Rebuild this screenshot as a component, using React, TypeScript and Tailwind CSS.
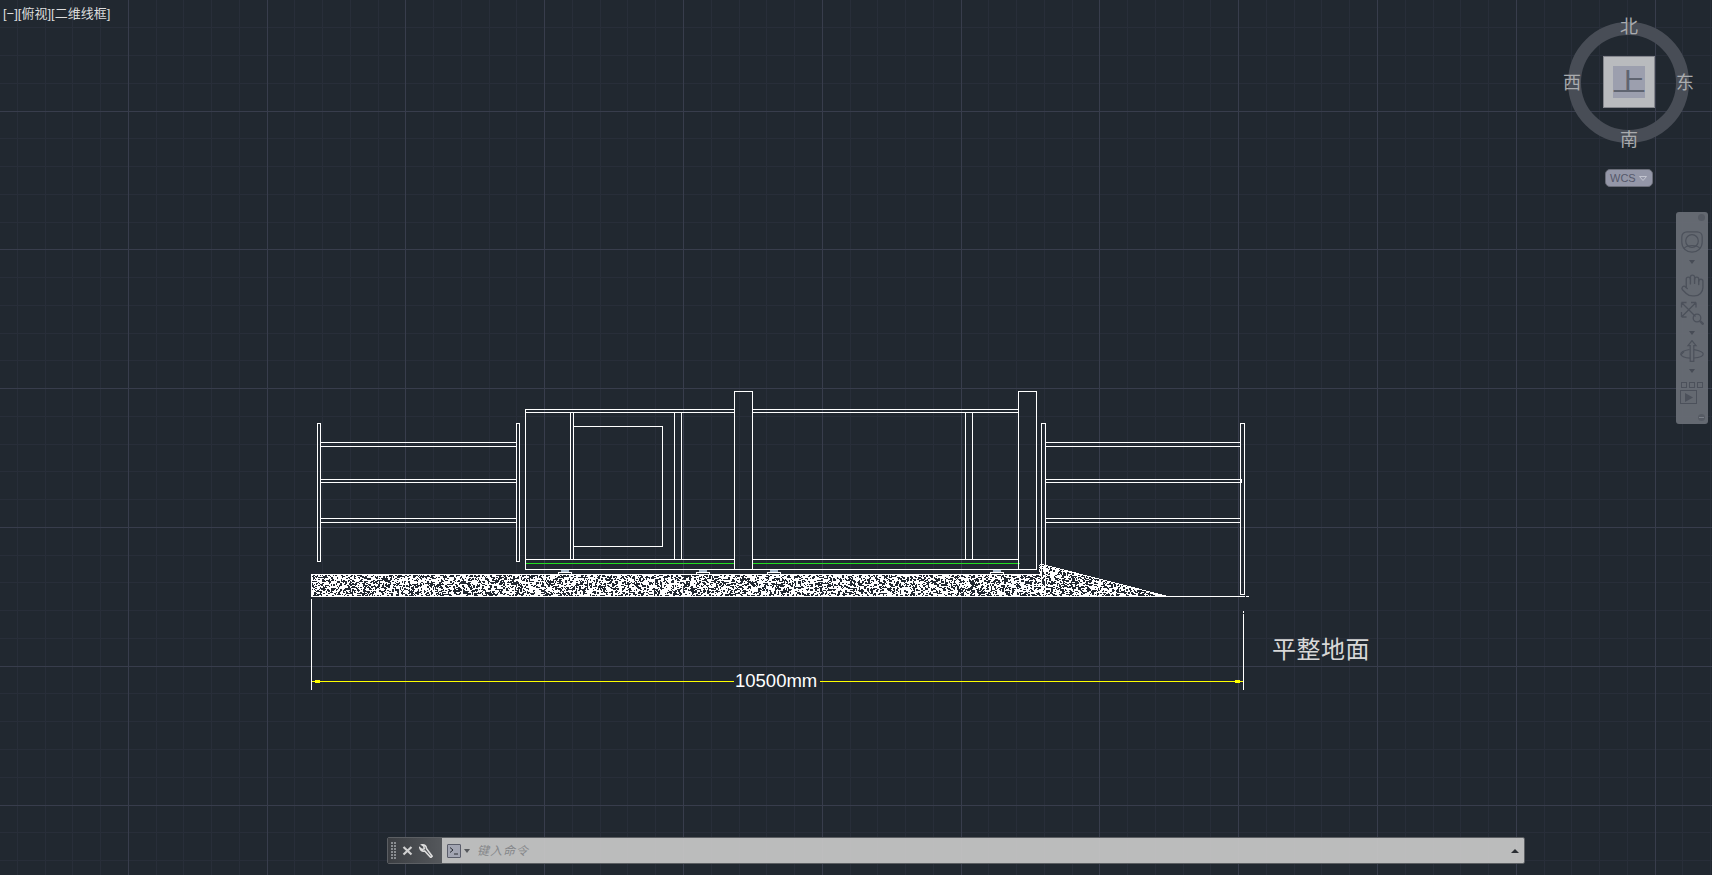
import React from 'react';
import { Hand } from 'lucide-react';

const cjk = "font-['Liberation_Sans','Noto_Sans_CJK_SC',sans-serif]";

// grid spacing in the model view, every fifth line is a major one
const STEP = 27.76;
const gridLines = (origin: number, max: number) => {
  const out: { p: number; major: boolean }[] = [];
  for (let k = -Math.ceil(origin / STEP); origin + k * STEP < max; k++) {
    out.push({ p: Math.floor(origin + k * STEP) + 0.5, major: ((k % 5) + 5) % 5 === 0 });
  }
  return out;
};

// ground hatch: white field with small dark holes dug at seeded random, written as a single path
const buildHatch = () => {
  let seed = 2024;
  const rnd = () => {
    seed = (seed * 1664525 + 1013904223) % 4294967296;
    return seed / 4294967296;
  };
  const X0 = 311;
  const Y0 = 564;
  const W = 856;
  const H = 32;
  const cells = new Uint8Array(W * H).fill(1);
  const holes = Math.floor(W * H * 0.27);
  for (let n = 0; n < holes; n++) {
    const hx = Math.floor(rnd() * W);
    const hy = Math.floor(rnd() * H);
    const hw = 1 + Math.floor(rnd() * 2);
    const hh = rnd() < 0.3 ? 2 : 1;
    for (let y = hy; y < Math.min(H, hy + hh); y++) {
      for (let x = hx; x < Math.min(W, hx + hw); x++) cells[y * W + x] = 0;
    }
  }
  const top = (x: number) => (x < 1039 ? 575 : 564 + ((x - 1039) * 32) / 126);
  let d = '';
  for (let y = 0; y < H; y++) {
    let run = -1;
    for (let x = 0; x <= W; x++) {
      const on = x < W && cells[y * W + x] === 1 && Y0 + y >= top(X0 + x);
      if (on && run < 0) run = x;
      if (!on && run >= 0) {
        d += `M${X0 + run} ${Y0 + y}h${x - run}v1h-${x - run}z`;
        run = -1;
      }
    }
  }
  return d;
};
const hatch = buildHatch();

const Box = ({ x, y, w, h }: { x: number; y: number; w: number; h: number }) => (
  <rect x={x + 0.5} y={y + 0.5} width={w} height={h} fill="none" stroke="#fff" />
);
const HLine = ({ x1, x2, y, c = '#fff' }: { x1: number; x2: number; y: number; c?: string }) => (
  <line x1={x1} x2={x2} y1={y + 0.5} y2={y + 0.5} stroke={c} />
);
const VLine = ({ x, y1, y2 }: { x: number; y1: number; y2: number }) => (
  <line x1={x + 0.5} x2={x + 0.5} y1={y1} y2={y2} stroke="#fff" />
);

const Rails = ({ x1, x2 }: { x1: number; x2: number }) => (
  <g>
    {[442, 446, 479, 482, 518, 522].map((y) => (
      <HLine key={y} x1={x1} x2={x2} y={y} />
    ))}
  </g>
);

const Foot = ({ x }: { x: number }) => (
  <g>
    <rect x={x + 3} y={570} width={8} height={2} fill="#a9bccd" />
    <rect x={x + 0.5} y={572.5} width={13} height={2} fill="#212830" stroke="#fff" />
  </g>
);

const Drawing = () => (
  <svg className="absolute inset-0" width={1712} height={875} shapeRendering="crispEdges">
    {gridLines(128.3, 1712).filter((l) => !l.major).map((l) => (
      <line key={l.p} x1={l.p} x2={l.p} y1={0} y2={875} stroke="#282e39" />
    ))}
    {gridLines(111, 875).filter((l) => !l.major).map((l) => (
      <line key={l.p} y1={l.p} y2={l.p} x1={0} x2={1712} stroke="#282e39" />
    ))}
    {gridLines(128.3, 1712).filter((l) => l.major).map((l) => (
      <line key={l.p} x1={l.p} x2={l.p} y1={0} y2={875} stroke="#383d4c" />
    ))}
    {gridLines(111, 875).filter((l) => l.major).map((l) => (
      <line key={l.p} y1={l.p} y2={l.p} x1={0} x2={1712} stroke="#383d4c" />
    ))}

    {/* ground and ramp */}
    <path d={hatch} fill="#fff" />
    <HLine x1={311} x2={1040} y={574} />
    <HLine x1={311} x2={1245} y={596} />
    <HLine x1={1246} x2={1249} y={596} />
    <VLine x={311} y1={574} y2={597} />
    <line x1={1040} y1={564} x2={1166} y2={596} stroke="#fff" />

    {/* left fence */}
    <Rails x1={320} x2={517} />
    <Box x={317} y={423} w={3} h={138} />
    <Box x={516} y={423} w={3} h={138} />

    {/* container */}
    <VLine x={525} y1={409} y2={570} />
    {[409, 412].map((y) => (
      <g key={y}>
        <HLine x1={525} x2={735} y={y} />
        <HLine x1={752} x2={1019} y={y} />
      </g>
    ))}
    <HLine x1={525} x2={735} y={559} />
    <HLine x1={752} x2={1019} y={559} />
    <HLine x1={526} x2={735} y={563} c="#22dd22" />
    <HLine x1={752} x2={1020} y={563} c="#22dd22" />
    <HLine x1={525} x2={1037} y={569} />
    {[570, 573, 674, 681, 965, 972].map((x) => (
      <VLine key={x} x={x} y1={412} y2={559} />
    ))}
    <Box x={573} y={426} w={89} h={120} />
    <Box x={734} y={391} w={18} h={178} />
    <Box x={1018} y={391} w={18} h={178} />
    {[558, 696, 767, 990].map((x) => (
      <Foot key={x} x={x} />
    ))}

    {/* right fence */}
    <Rails x1={1045} x2={1241} />
    <Box x={1041} y={423} w={4} h={171} />
    <Box x={1240} y={423} w={4} h={171} />
    <VLine x={1241} y1={479} y2={483} />

    {/* dimension */}
    <VLine x={311} y1={599} y2={690} />
    <VLine x={1243} y1={614} y2={690} />
    <VLine x={1243} y1={611} y2={613} />
    <HLine x1={312} x2={734} y={681} c="#ffff00" />
    <HLine x1={820} x2={1243} y={681} c="#ffff00" />
    <rect x={315} y={680} width={5} height={3} fill="#ffff00" />
    <rect x={1235} y={680} width={5} height={3} fill="#ffff00" />
  </svg>
);

const Chevron = ({ className }: { className: string }) => (
  <svg className={className} width={6} height={4} viewBox="0 0 6 4">
    <path d="M0 0h6L3 4z" fill="#474c56" />
  </svg>
);

const NavBar = () => (
  <div className="absolute left-[1676px] top-[212px] flex h-[212px] w-[32px] flex-col items-center rounded-[3px] bg-[#6b7079]/90 text-[#4c515b]">
    <span className="absolute right-[3px] top-[2px] h-[7px] w-[7px] rounded-full bg-[#565b64]" />
    <svg className="mt-[19px]" width={22} height={22} viewBox="0 0 22 22" fill="none" stroke="currentColor" strokeWidth={1.2}>
      <path d="M6 .8h10c3 0 5.2 2.2 5.2 5v5.5c0 6-5 9.9-10.2 9.900S.8 17.300.8 11.300V6C.8 3 3 .8 6 .8z" />
      <circle cx={11} cy={10} r={6.3} />
      <path d="M3 17.500c2-2.500 5-3 8-3s6 .5 8 3" />
    </svg>
    <Chevron className="mt-[7px]" />
    <Hand className="mt-[9px]" size={25} strokeWidth={1.3} />
    <svg className="mt-[3px]" width={24} height={24} viewBox="0 0 24 24" fill="none" stroke="currentColor" strokeWidth={1.3}>
      <path d="M1.500 1.500l14 14M1.500 1.500h5M1.500 1.500v5M16 1.500L1.500 16M16 1.500h-5M16 1.500v5M1.500 16v-5M1.500 16h5" />
      <circle cx={17} cy={17} r={3.800} />
      <path d="M20 20l3.500 3.500" strokeWidth={2.400} />
    </svg>
    <Chevron className="mt-[6px]" />
    <svg className="mt-[5px]" width={24} height={22} viewBox="0 0 24 22" fill="none" stroke="currentColor" strokeWidth={1.2}>
      <path d="M12 .6l4 5h-2.200v15.800h-3.600V5.600H8z" />
      <path d="M9.500 9.500C4 10.500.8 12 .8 14s3.500 4 9.400 4.200M14 9.600c5.500 1 9.200 2.400 9.200 4.400s-3.500 3.600-9.400 4" />
      <path d="M4 11.500L.8 15" />
    </svg>
    <Chevron className="mt-[7px]" />
    <div className="mt-[9px] flex gap-[2px]">
      <span className="h-[6px] w-[6px] border border-[#4c515b]" />
      <span className="h-[6px] w-[6px] border border-[#4c515b]" />
      <span className="h-[6px] w-[6px] border border-[#4c515b]" />
    </div>
    <div className="ml-[4px] mt-[2px] flex h-[14px] w-[17px] items-center justify-center self-start border border-[#4c515b]">
      <svg width={8} height={9} viewBox="0 0 8 9">
        <path d="M0 0l8 4.500L0 9z" fill="#4c515b" />
      </svg>
    </div>
    <span className="absolute bottom-[3px] right-[3px] flex h-[7px] w-[7px] items-center justify-center rounded-full bg-[#565b64]">
      <span className="h-px w-[5px] bg-[#7a7f88]" />
    </span>
  </div>
);

const ViewCube = () => (
  <div className={`absolute left-[1560px] top-[14px] h-[176px] w-[138px] text-[18px] leading-[18px] text-[#a9abae] ${cjk}`}>
    <div className="absolute left-[8px] top-[8px] h-[121px] w-[121px] rounded-full border-[13px] border-[#484d56]" />
    <span className="absolute left-[60px] top-[4px]">北</span>
    <span className="absolute left-[60px] top-[117px]">南</span>
    <span className="absolute left-[3px] top-[60px]">西</span>
    <span className="absolute left-[116px] top-[60px]">东</span>
    <div className="absolute left-[43px] top-[42px] flex h-[52px] w-[52px] items-center justify-center border border-[#85878d] bg-[#b9bbbe]">
      <div className="flex h-[32px] w-[32px] items-center justify-center overflow-hidden bg-[#9c9fae] text-[34px] leading-[32px] text-[#5f6470]">
        <span className="scale-y-75">上</span>
      </div>
    </div>
    <div className="absolute left-[45px] top-[155px] flex h-[18px] w-[48px] items-center justify-between rounded-[5px] border border-[#6a6d78] bg-[#9497a8] pl-[4px] pr-[5px] text-[11px] leading-none text-[#55586a]">
      <span className="font-['Liberation_Sans',sans-serif]">WCS</span>
      <svg width={8} height={5} viewBox="0 0 8 5" fill="none" stroke="#c2c4cf">
        <path d="M.5.500h7L4 4.500z" />
      </svg>
    </div>
  </div>
);

const CommandBar = () => (
  <div className="absolute left-[387px] top-[837px] flex h-[27px] w-[1138px] items-stretch overflow-hidden rounded-[2px] border border-[#5c5f63]">
    <div className="flex w-[54px] items-center bg-gradient-to-r from-[#3b3e42] to-[#55585c] pl-[3px]">
      <div className="grid grid-cols-2 gap-[1px]">
        {Array.from({ length: 12 }).map((_, i) => (
          <span key={i} className="h-[2px] w-[2px] bg-[#8a8d91]" />
        ))}
      </div>
      <svg className="ml-[6px]" width={11} height={11} viewBox="0 0 11 11" stroke="#d0d0d0" strokeWidth={2.200}>
        <path d="M1.500 2l8 7.500M9.500 2l-8 7.500" />
      </svg>
      <svg className="ml-[6px]" width={14} height={14} viewBox="0 0 16 16" fill="none" stroke="#dcdcdc" strokeWidth={1.800}>
        <path d="M15 14l-1.500 1.500L6.500 8C4.500 8.500 2 7.500 1 4.500L3.500 6.500 6 5.500 5.500 2.500 3.500 1c3-.5 5 1.500 5 4z" />
      </svg>
    </div>
    <div className="flex flex-1 items-center bg-[#c4c4c4]/95 pl-[5px] pr-[4px]">
      <div className="flex h-[14px] w-[14px] items-center justify-center rounded-[1px] border border-[#5a5d6a] bg-[#a2a5b2]">
        <svg width={10} height={8} viewBox="0 0 10 8" fill="none" stroke="#2a2d33">
          <path d="M1 .5l3 2.500-3 2.500M5 7h4" />
        </svg>
      </div>
      <svg className="ml-[3px]" width={6} height={4} viewBox="0 0 6 4">
        <path d="M0 0h6L3 4z" fill="#55585c" />
      </svg>
      <span className={`ml-[7px] text-[12px] italic leading-none tracking-[1px] text-[#85878a] ${cjk}`}>键入命令</span>
      <svg className="ml-auto mr-[1px]" width={8} height={4} viewBox="0 0 8 4">
        <path d="M4 0l4 4H0z" fill="#2a2e33" />
      </svg>
    </div>
  </div>
);

export default function App() {
  return (
    <div className="relative h-[875px] w-[1712px] overflow-hidden bg-[#212830]">
      <Drawing />
      <span className={`absolute left-[3px] top-[5px] whitespace-nowrap text-[13px] leading-[17px] text-[#dcdcdc] ${cjk}`}>
        [−][俯视][二维线框]
      </span>
      <span className="absolute left-[735px] top-[671px] font-['Liberation_Sans',sans-serif] text-[18.500px] leading-[20px] text-white">
        10500mm
      </span>
      <span className={`absolute left-[1272px] top-[637px] text-[24px] leading-[26px] tracking-[0.5px] text-[#d8d8d8] ${cjk}`}>
        平整地面
      </span>
      <ViewCube />
      <NavBar />
      <CommandBar />
    </div>
  );
}
